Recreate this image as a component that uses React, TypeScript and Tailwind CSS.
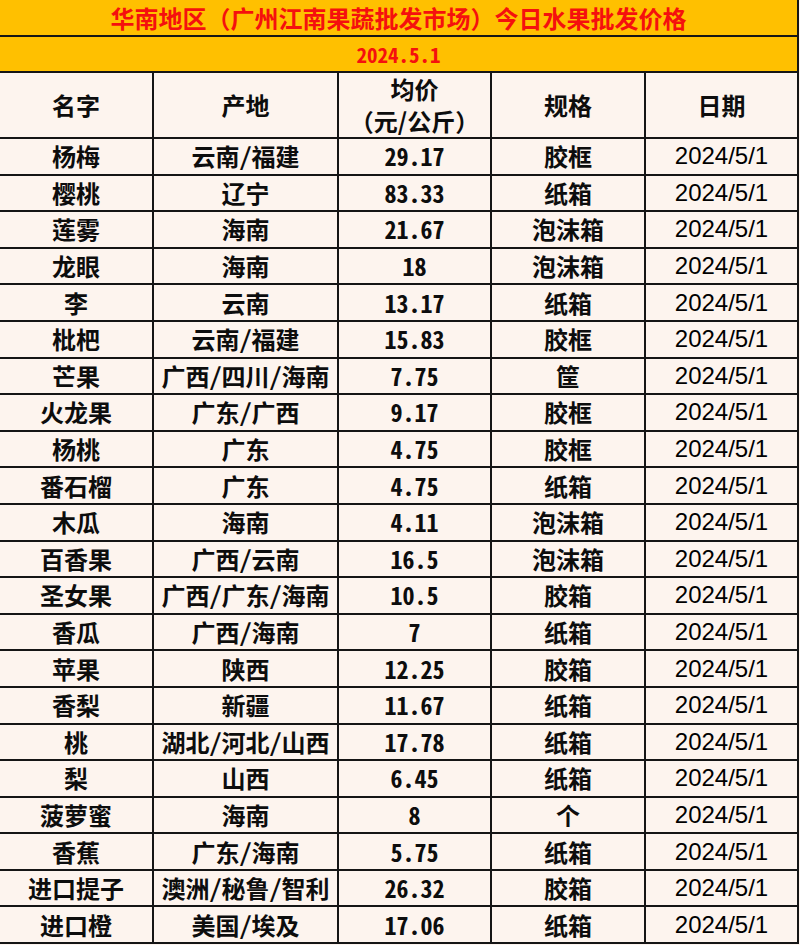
import React from "react";

const rows: [string, string, string, string][] = [
  ["杨梅", "云南/福建", "29.17", "胶框"],
  ["樱桃", "辽宁", "83.33", "纸箱"],
  ["莲雾", "海南", "21.67", "泡沫箱"],
  ["龙眼", "海南", "18", "泡沫箱"],
  ["李", "云南", "13.17", "纸箱"],
  ["枇杷", "云南/福建", "15.83", "胶框"],
  ["芒果", "广西/四川/海南", "7.75", "筐"],
  ["火龙果", "广东/广西", "9.17", "胶框"],
  ["杨桃", "广东", "4.75", "胶框"],
  ["番石榴", "广东", "4.75", "纸箱"],
  ["木瓜", "海南", "4.11", "泡沫箱"],
  ["百香果", "广西/云南", "16.5", "泡沫箱"],
  ["圣女果", "广西/广东/海南", "10.5", "胶箱"],
  ["香瓜", "广西/海南", "7", "纸箱"],
  ["苹果", "陕西", "12.25", "胶箱"],
  ["香梨", "新疆", "11.67", "纸箱"],
  ["桃", "湖北/河北/山西", "17.78", "纸箱"],
  ["梨", "山西", "6.45", "纸箱"],
  ["菠萝蜜", "海南", "8", "个"],
  ["香蕉", "广东/海南", "5.75", "纸箱"],
  ["进口提子", "澳洲/秘鲁/智利", "26.32", "胶箱"],
  ["进口橙", "美国/埃及", "17.06", "纸箱"],
];

const cjk = "font-['Noto_Sans_CJK_SC',sans-serif] font-bold";
const half = "[font-feature-settings:'hwid']";
const cell = "flex items-center justify-center border-r-2 border-[#151515]";

const App = () => {
  return (
    <div className="w-[800px] h-[945px] bg-[#fdf4ee] text-[#0d0d0d] overflow-hidden">
      <div className="w-[799px]">
        <div className={`h-[37px] flex items-center justify-center bg-[#ffc000] border-b-2 border-r-2 border-[#151515] text-[24px] leading-none text-[#f5100e] ${cjk}`}>
          华南地区（广州江南果蔬批发市场）今日水果批发价格
        </div>
        <div className={`h-[36px] flex items-center justify-center bg-[#ffc000] border-b-2 border-r-2 border-[#151515] text-[21px] leading-none text-[#f5100e] ${cjk} ${half}`}>
          2024.5.1
        </div>
        <div className={`h-[66px] grid grid-cols-[154px_185px_153px_154px_153px] border-b-2 border-[#151515] text-[24px] ${cjk}`}>
          <div className={cell}>名字</div>
          <div className={cell}>产地</div>
          <div className={`${cell} flex-col leading-[32px]`}>
            <span>均价</span>
            <span>（元/公斤）</span>
          </div>
          <div className={cell}>规格</div>
          <div className={cell}>日期</div>
        </div>
        {rows.map((r) => (
          <div
            key={r[0]}
            className={`h-[36.6px] grid grid-cols-[154px_185px_153px_154px_153px] border-b-2 border-[#151515] text-[24px] leading-none ${cjk} ${half}`}
          >
            <div className={cell}>{r[0]}</div>
            <div className={cell}>{r[1]}</div>
            <div className={cell}>{r[2]}</div>
            <div className={cell}>{r[3]}</div>
            <div className={`${cell} font-['Liberation_Sans',sans-serif] font-normal text-black [font-feature-settings:normal]`}>
              2024/5/1
            </div>
          </div>
        ))}
      </div>
    </div>
  );
};

export default App;
